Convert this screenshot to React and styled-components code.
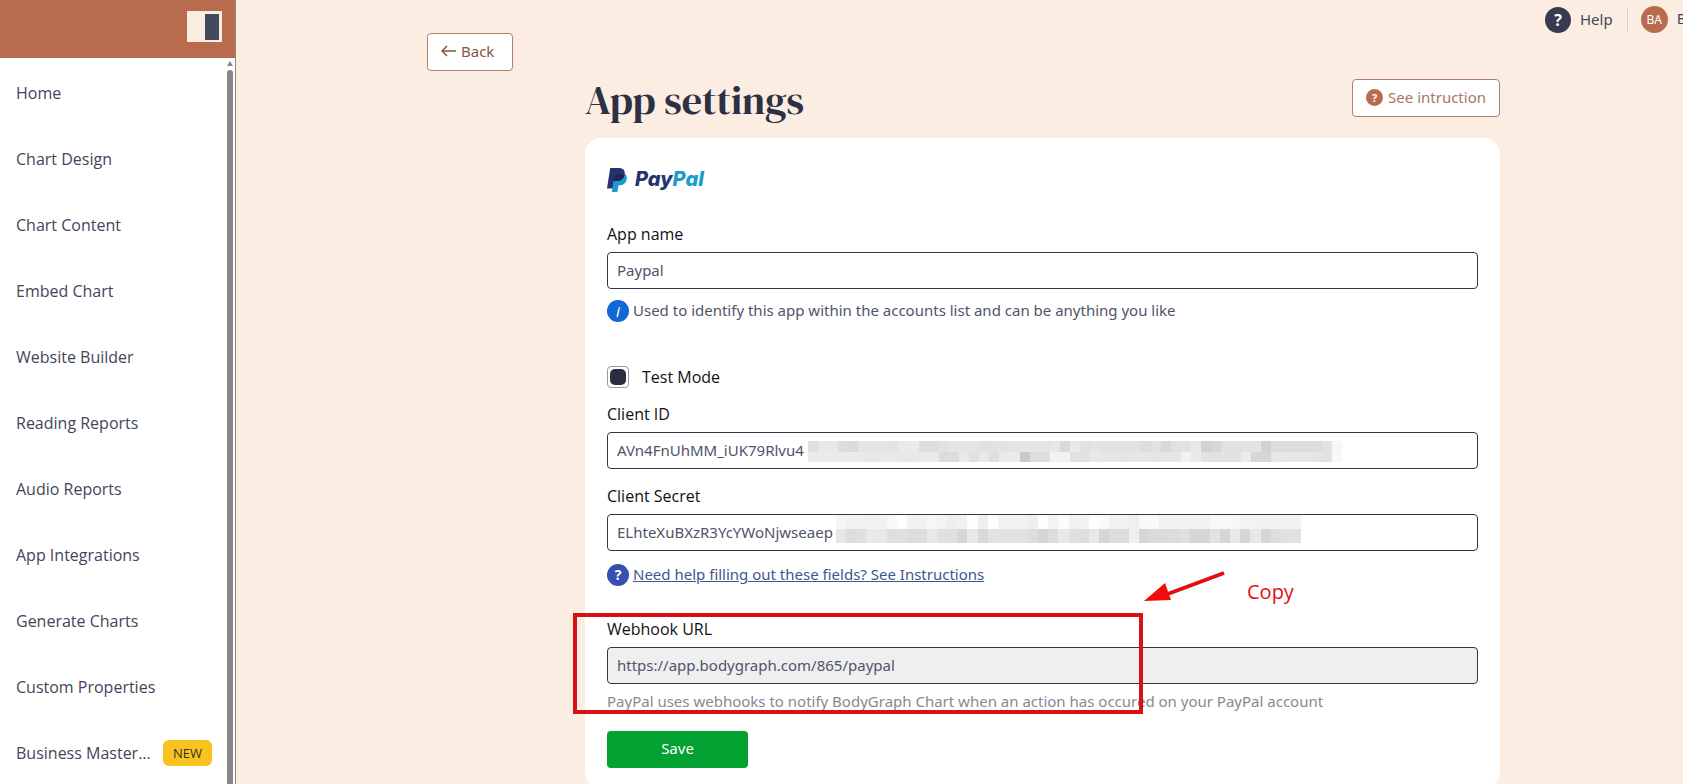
import React, { useState } from 'react';
import styled, { createGlobalStyle } from 'styled-components';

const GlobalStyle = createGlobalStyle`
  * { box-sizing: border-box; }
  body {
    margin: 0;
    background: #fcede2;
    font-family: "Noto Sans", "Open Sans", sans-serif;
    font-size: 15px;
    color: #43465a;
  }
  button, input { font: inherit; }
`;

const Page = styled.div`
  display: flex;
  height: 100vh;
  overflow: hidden;
`;

const Sidebar = styled.aside`
  display: flex;
  flex-direction: column;
  flex: 0 0 236px;
  background: #fff;
  border-right: 1px solid #8f8a8a;
`;

const SidebarHeader = styled.div`
  display: flex;
  justify-content: flex-end;
  align-items: flex-start;
  flex: 0 0 58px;
  padding: 11px 13px;
  background: #b96c4d;
`;

const Toggle = styled.button`
  display: flex;
  justify-content: flex-end;
  width: 35px;
  height: 31px;
  padding: 3px;
  border: none;
  background: #fcede2;
  cursor: pointer;
`;

const TogglePane = styled.span`
  width: 14px;
  height: 26px;
  background: #434a5c;
`;

const SidebarBody = styled.div`
  display: flex;
  flex: 1;
  min-height: 0;
`;

const Nav = styled.nav`
  flex: 1;
  min-width: 0;
  padding-top: 2px;
  overflow: hidden;
`;

const NavItem = styled.a`
  display: flex;
  align-items: center;
  justify-content: space-between;
  height: 66px;
  padding: 0 13px 0 16px;
  color: #43465a;
  font-family: "Open Sans", sans-serif;
  font-size: 16px;
  text-decoration: none;
`;

const NewBadge = styled.span`
  padding: 0 10px;
  border-radius: 6px;
  background: #f9c31f;
  color: #33302a;
  font-size: 13px;
  line-height: 26px;
`;

const Scrollbar = styled.div`
  display: flex;
  flex-direction: column;
  align-items: center;
  gap: 4px;
  width: 10px;
  padding: 3px 2px 0;
`;

const ScrollArrow = styled.span`
  border: 3px solid transparent;
  border-top: none;
  border-bottom: 5px solid #858585;
`;

const ScrollThumb = styled.span`
  flex: 1;
  width: 6px;
  border-radius: 3px 3px 0 0;
  background: #888;
`;

const Main = styled.main`
  flex: 1;
  min-width: 0;
  overflow: hidden;
`;

const TopBar = styled.div`
  display: flex;
  align-items: center;
  width: 138px;
  height: 33px;
  margin-left: auto;
  padding-top: 6px;
  overflow: hidden;
  white-space: nowrap;
`;

const TopLink = styled.a`
  display: flex;
  flex: none;
  gap: 9px;
  color: #43465a;
  line-height: 24px;
  text-decoration: none;
`;

const Divider = styled.span`
  flex: none;
  width: 1px;
  height: 25px;
  margin: 0 13px 0 14px;
  background: #dccdc8;
`;

const Circle = styled.span`
  display: inline-flex;
  align-items: center;
  justify-content: center;
  flex: none;
  width: ${props => props.$size}px;
  height: ${props => props.$size}px;
  border-radius: 50%;
  background: ${props => props.$bg};
  color: #fff;
  font-size: ${props => props.$font}px;
  font-weight: ${props => props.$weight || 700};
  font-style: ${props => (props.$italic ? 'italic' : 'normal')};
`;

const OutlineButton = styled.button`
  display: inline-flex;
  align-items: center;
  gap: 5px;
  height: 38px;
  padding: 0 ${props => props.$right}px 2px 13px;
  border: 1px solid #b08074;
  border-radius: 4px;
  background: #fff;
  color: ${props => props.$color};
  cursor: pointer;
`;

const Body = styled.div`
  padding: 0 183px 0 191px;
`;

const Content = styled.div`
  margin-left: 158px;
`;

const TitleRow = styled.div`
  display: flex;
  align-items: flex-start;
  justify-content: space-between;
  height: 67px;
  padding-top: 8px;
`;

const Title = styled.h1`
  margin: 0;
  color: #2d3045;
  font-family: "DM Serif Display", "Liberation Serif", serif;
  font-size: 40px;
  font-weight: 400;
  line-height: 42px;
`;

const Card = styled.form`
  padding: 28px 22px 20px;
  border-radius: 16px;
  background: #fff;
`;

const Logo = styled.div`
  display: flex;
  align-items: center;
  gap: 8px;
  height: 27px;
`;

const LogoText = styled.span`
  color: #25346e;
  font-family: Inter, sans-serif;
  font-size: 20px;
  font-style: italic;
  font-weight: 800;
  line-height: 27px;
`;

const LogoAccent = styled.span`
  color: #1a9bd0;
`;

const Label = styled.label`
  display: block;
  margin-top: ${props => props.$top}px;
  padding-bottom: 8px;
  color: #111;
  font-family: "Open Sans", sans-serif;
  font-size: 16px;
  line-height: 20px;
`;

const Field = styled.div`
  position: relative;
`;

const Input = styled.input`
  display: block;
  width: 100%;
  height: 37px;
  padding: 0 9px 2px;
  border: 1px solid #33364a;
  border-radius: 4px;
  background: ${props => (props.readOnly ? '#efefef' : '#fff')};
  color: #50546a;
  outline: none;
`;

const Mask = styled.div`
  position: absolute;
  top: ${props => props.$top}px;
  left: ${props => props.$left}px;
  display: grid;
  grid-template-columns: repeat(${props => props.$cols}, 1fr);
  width: ${props => props.$width}px;
  height: ${props => props.$height}px;
  opacity: 0.85;
`;

const Hint = styled.div`
  display: flex;
  gap: 4px;
  height: 22px;
  margin-top: ${props => props.$top}px;
  color: ${props => (props.$muted ? '#868993' : '#50546a')};
  line-height: 20px;
`;

const HelpLink = styled.a`
  color: #3e5690;
`;

const CheckRow = styled.label`
  display: flex;
  align-items: center;
  gap: 13px;
  margin-top: 44px;
  color: #111;
  font-family: "Open Sans", sans-serif;
  font-size: 16px;
  line-height: 22px;
`;

const Checkbox = styled.input`
  appearance: none;
  width: 22px;
  height: 22px;
  margin: 0;
  padding: 2px;
  border: 1px solid #9a9aa2;
  border-radius: 4px;
  &:checked::before {
    content: '';
    display: block;
    height: 16px;
    border-radius: 5px;
    background: #2b2e42;
  }
`;

const Webhook = styled.section`
  position: relative;
  padding-top: 33px;
`;

const Highlight = styled.div`
  position: absolute;
  top: 27px;
  left: -34px;
  width: 570px;
  height: 101px;
  border: 4px solid #d81212;
  pointer-events: none;
`;

const Arrow = styled.svg`
  position: absolute;
  top: -16px;
  left: 536px;
  width: 84px;
  height: 34px;
`;

const Note = styled.span`
  position: absolute;
  top: -8px;
  left: 640px;
  color: #e01010;
  font-family: "Open Sans", sans-serif;
  font-size: 20px;
  line-height: 28px;
`;

const Save = styled.button`
  display: block;
  width: 141px;
  height: 37px;
  margin-top: 18px;
  padding: 0 0 3px;
  border: none;
  border-radius: 4px;
  background: #03a032;
  color: #fff;
  cursor: pointer;
`;

const navItems = [
  'Home', 'Chart Design', 'Chart Content', 'Embed Chart', 'Website Builder', 'Reading Reports',
  'Audio Reports', 'App Integrations', 'Generate Charts', 'Custom Properties',
];

// grey level of each block, one row per line
const idLevels = [
  ['da', 'e5', 'e5', 'd8', 'd4', 'e0', 'e0', 'e1', 'df', 'e6', 'e8', 'd9', 'd9', 'dd', 'e2', 'e0', 'e0', 'db', 'dd', 'df', 'e0', 'e2', 'e0', 'e0', 'e3', 'd4', 'e6', 'dc', 'e0', 'de', 'de', 'dd', 'de', 'd8', 'dc', 'd2', 'dc', 'dd', 'e6', 'c9', 'd0', 'dc', 'dc', 'de', 'e0', 'cb', 'd7', 'd6', 'd6', 'd6', 'd6', 'dc', 'f6'],
  ['e8', 'e8', 'e8', 'e8', 'e8', 'e6', 'e3', 'e6', 'e6', 'e4', 'e4', 'e6', 'e6', 'd6', 'd8', 'e6', 'dc', 'e6', 'd9', 'e6', 'e8', 'c0', 'd8', 'd8', 'f0', 'f0', 'de', 'dc', 'e5', 'e2', 'e2', 'e1', 'e2', 'e2', 'e0', 'e2', 'e2', 'f0', 'e6', 'dd', 'dc', 'de', 'dc', 'e8', 'cf', 'cf', 'e4', 'e2', 'e2', 'e2', 'e0', 'dc', 'f6'],
];

const secretLevels = [
  ['f5', 'f0', 'f0', 'ef', 'f0', 'f8', 'fe', 'ef', 'f0', 'f6', 'f1', 'ec', 'ef', 'fe', 'ed', 'fe', 'f0', 'f0', 'f0', 'ec', 'fd', 'f2', 'fc', 'f0', 'f0', 'fe', 'fb', 'f0', 'f0', 'ec', 'f8', 'fa', 'f0', 'f0', 'f0', 'f0', 'f0', 'f8', 'f8', 'f6', 'f2', 'f2', 'f0', 'f0', 'f0', 'f0'],
  ['e2', 'd8', 'da', 'e6', 'e4', 'da', 'da', 'd6', 'd8', 'e5', 'db', 'db', 'd0', 'e4', 'd2', 'dd', 'dd', 'dd', 'dd', 'd8', 'cf', 'd8', 'e6', 'db', 'd9', 'e5', 'cf', 'd8', 'd8', 'ed', 'cf', 'd5', 'd5', 'd6', 'da', 'cf', 'cf', 'de', 'cf', 'e6', 'cf', 'e4', 'd1', 'd9', 'dc', 'dc'],
];

const MaskedField = ({ id, value, levels, top, left, width, height }) => (
  <Field>
    <Input id={id} defaultValue={value} />
    <Mask $cols={levels[0].length} $top={top} $left={left} $width={width} $height={height}>
      {levels.flat().map((level, i) => (
        <span key={i} style={{ background: `#${level}${level}${level}` }} />
      ))}
    </Mask>
  </Field>
);

const PaypalMark = () => (
  <svg width="20" height="24" viewBox="0 0 20 24">
    <path d="M16.8 5.200c2.600 1.600 3.500 3.600 2.800 6.600-.8 3.600-3.300 5.500-6.800 5.500h-1.200L10.400 24H4.800L7.500 9z" fill="#1a9bd0" />
    <path d="M3.200 0H11.500c4.600 0 7 2.400 6.100 6.700-.9 4.400-4 6.300-8.300 6.300H6.900L5.500 20.500H0z" fill="#25346e" />
    <path d="M7.700 8.200l1-1.200c.2-.7.7-.9 1.400-.9h5c.9 0 1.700.1 2.400.4-.8 4.500-3.900 6.500-8.200 6.500H6.900z" fill="#1b2658" />
  </svg>
);

const BackArrow = () => (
  <svg width="15" height="12" viewBox="0 0 15 12" fill="none" stroke="currentColor" strokeWidth="1.5">
    <path d="M15 6H1M6 1L1 6l5 5" />
  </svg>
);

const App = () => {
  const [testMode, setTestMode] = useState(true);

  return (
    <Page>
      <GlobalStyle />
      <Sidebar>
        <SidebarHeader>
          <Toggle aria-label="Toggle sidebar"><TogglePane /></Toggle>
        </SidebarHeader>
        <SidebarBody>
          <Nav>
            {navItems.map(item => <NavItem key={item} href="#">{item}</NavItem>)}
            <NavItem href="#">Business Master... <NewBadge>NEW</NewBadge></NavItem>
          </Nav>
          <Scrollbar><ScrollArrow /><ScrollThumb /></Scrollbar>
        </SidebarBody>
      </Sidebar>
      <Main>
        <TopBar>
          <TopLink href="#"><Circle $size={26} $bg="#373b50" $font={16}>?</Circle>Help</TopLink>
          <Divider />
          <TopLink href="#"><Circle $size={27} $bg="#b96c4d" $font={12} $weight={400}>BA</Circle>B</TopLink>
        </TopBar>
        <Body>
          <OutlineButton $right={18} $color="#8a5348"><BackArrow />Back</OutlineButton>
          <Content>
            <TitleRow>
              <Title>App settings</Title>
              <OutlineButton $right={13} $color="#ac7467">
                <Circle $size={17} $bg="#b96c4d" $font={11}>?</Circle>See intruction
              </OutlineButton>
            </TitleRow>
            <Card>
              <Logo>
                <PaypalMark />
                <LogoText>Pay<LogoAccent>Pal</LogoAccent></LogoText>
              </Logo>
              <Label $top={31} htmlFor="name">App name</Label>
              <Input id="name" defaultValue="Paypal" />
              <Hint $top={11}>
                <Circle $size={22} $bg="#1266d6" $font={15} $weight={400} $italic>i</Circle>
                Used to identify this app within the accounts list and can be anything you like
              </Hint>
              <CheckRow>
                <Checkbox type="checkbox" checked={testMode} onChange={e => setTestMode(e.target.checked)} />
                Test Mode
              </CheckRow>
              <Label $top={16} htmlFor="clientId">Client ID</Label>
              <MaskedField id="clientId" value="AVn4FnUhMM_iUK79Rlvu4" levels={idLevels} top={9} left={201} width={534} height={21} />
              <Label $top={17} htmlFor="secret">Client Secret</Label>
              <MaskedField id="secret" value="ELhteXuBXzR3YcYWoNjwseaep" levels={secretLevels} top={1} left={229} width={465} height={28} />
              <Hint $top={13}>
                <Circle $size={22} $bg="#3550ae" $font={14}>?</Circle>
                <HelpLink href="#">Need help filling out these fields? See Instructions</HelpLink>
              </Hint>
              <Webhook>
                <Label $top={0} htmlFor="url">Webhook URL</Label>
                <Input id="url" readOnly value="https://app.bodygraph.com/865/paypal" />
                <Hint $top={7} $muted>
                  PayPal uses webhooks to notify BodyGraph Chart when an action has occured on your PayPal account
                </Hint>
                <Highlight />
                <Arrow viewBox="0 0 84 34" aria-hidden="true">
                  <path d="M81 3L22 25" stroke="#e01010" strokeWidth="4" />
                  <path d="M1 31L22 13l6 17z" fill="#f30b0b" />
                </Arrow>
                <Note>Copy</Note>
              </Webhook>
              <Save type="button">Save</Save>
            </Card>
          </Content>
        </Body>
      </Main>
    </Page>
  );
};

export default App;
